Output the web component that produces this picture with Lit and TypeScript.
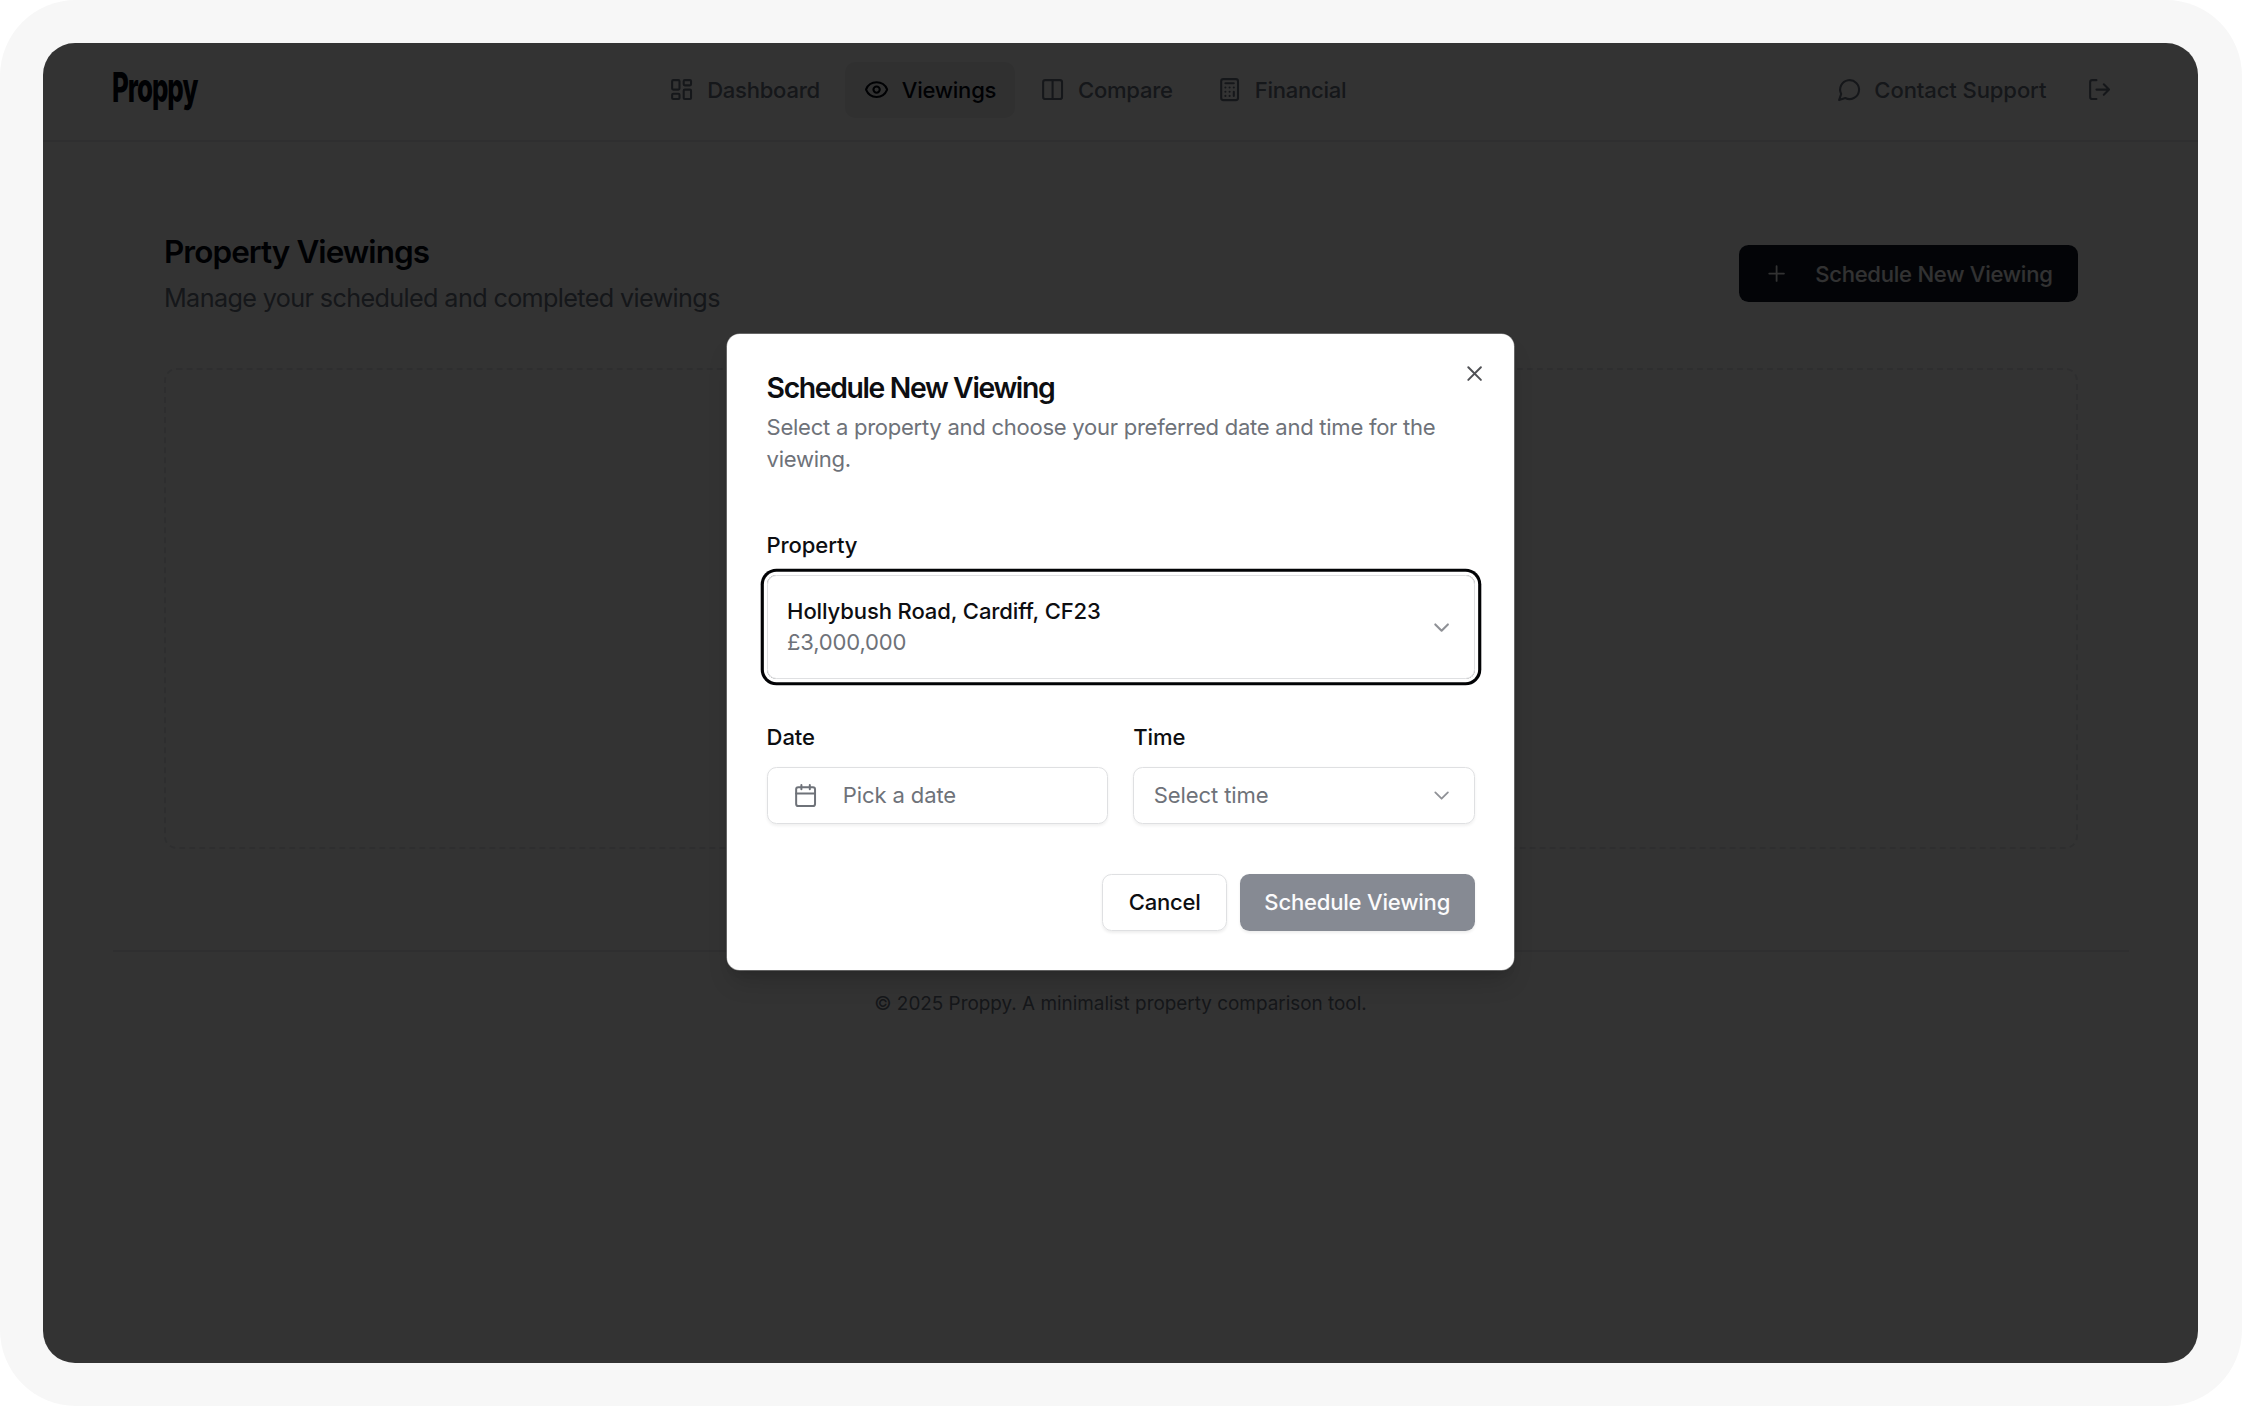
import { LitElement, html, css, svg, TemplateResult } from 'lit';
import { customElement, property } from 'lit/decorators.js';

const ICONS: Record<string, TemplateResult> = {
  dashboard: svg`<rect x="3" y="3" width="7" height="9" rx="1"/><rect x="14" y="3" width="7" height="5" rx="1"/><rect x="14" y="12" width="7" height="9" rx="1"/><rect x="3" y="16" width="7" height="5" rx="1"/>`,
  eye: svg`<path d="M2.06 12.35a1 1 0 0 1 0-.7 10.75 10.75 0 0 1 19.88 0 1 1 0 0 1 0 .7 10.75 10.75 0 0 1-19.88 0"/><circle cx="12" cy="12" r="3"/>`,
  columns: svg`<rect x="3" y="3" width="18" height="18" rx="2"/><path d="M12 3v18"/>`,
  calculator: svg`<rect x="4" y="2" width="16" height="20" rx="2"/><path d="M8 6h8M16 14v4M16 10h.01M12 10h.01M8 10h.01M12 14h.01M8 14h.01M12 18h.01M8 18h.01"/>`,
  message: svg`<path d="M7.9 20A9 9 0 1 0 4 16.1L2 22Z"/>`,
  logout: svg`<path d="M9 21H5a2 2 0 0 1-2-2V5a2 2 0 0 1 2-2h4M16 17l5-5-5-5M21 12H9"/>`,
  plus: svg`<path d="M5 12h14M12 5v14"/>`,
  close: svg`<path d="M18 6 6 18M6 6l12 12"/>`,
  chevron: svg`<path d="m6 9 6 6 6-6"/>`,
  calendar: svg`<path d="M8 2v4M16 2v4M3 10h18"/><rect x="3" y="4" width="18" height="18" rx="2"/>`,
};

@customElement('line-icon')
class LineIcon extends LitElement {
  @property() name = '';
  @property({ type: Number }) weight = 2;
  static styles = css`
    :host { display: block; flex: none; width: 25.2px; height: 25.2px; }
    svg { display: block; width: 100%; height: 100%; fill: none; stroke: currentColor; stroke-linecap: round; stroke-linejoin: round; }
  `;
  render() {
    return html`<svg viewBox="0 0 24 24" stroke-width=${this.weight}>${ICONS[this.name]}</svg>`;
  }
}

@customElement('app-header')
class AppHeader extends LitElement {
  static styles = css`
    :host { display: flex; align-items: center; box-sizing: border-box; height: 99px; padding: 0 69.5px 4px; border-bottom: 2px solid #eaebee; font-size: 22.05px; font-weight: 500; color: #6b7280; }
    .brand { width: 538px; color: #030712; }
    .word { display: inline-block; font-size: 40.5px; font-weight: 800; line-height: 48px; letter-spacing: -1.6px; transform: scaleX(0.638); transform-origin: 0 50%; margin: 0 0 4px -1px; }
    nav { display: flex; gap: 6.3px; }
    .item { display: flex; align-items: center; gap: 12.6px; height: 56px; padding: 0 18.9px; border-radius: 10px; white-space: nowrap; letter-spacing: -0.25px; }
    .item.active { background: #eeeff1; color: #030712; }
    .side { display: flex; align-items: center; margin-left: auto; padding-right: 16px; white-space: nowrap; letter-spacing: -0.1px; }
    .side span { margin: 0 41px 0 12.6px; }
  `;
  render() {
    const items = [['dashboard', 'Dashboard'], ['eye', 'Viewings'], ['columns', 'Compare'], ['calculator', 'Financial']];
    return html`
      <div class="brand"><span class="word">Proppy</span></div>
      <nav>${items.map(([icon, label]) => html`<div class="item ${label === 'Viewings' ? 'active' : ''}"><line-icon name=${icon}></line-icon><span>${label}</span></div>`)}</nav>
      <div class="side"><line-icon name="message"></line-icon><span>Contact Support</span><line-icon name="logout"></line-icon></div>`;
  }
}

@customElement('viewings-page')
class ViewingsPage extends LitElement {
  static styles = css`
    :host { display: block; }
    main { padding: 87.4px 120.5px 0 121px; }
    .top { display: flex; justify-content: space-between; align-items: center; }
    h1 { margin: 0 0 6px; font-size: 31.5px; line-height: 44px; font-weight: 600; letter-spacing: -0.95px; color: #030712; }
    p { margin: 0; font-size: 25.2px; line-height: 37.8px; letter-spacing: -0.63px; color: #6b7280; }
    .cta { display: flex; align-items: center; box-sizing: border-box; width: 338.5px; height: 56.7px; padding-left: 25px; gap: 26px; border-radius: 9.5px; background: #111827; color: #f9fafb; font-size: 22.05px; font-weight: 500; letter-spacing: -0.25px; white-space: nowrap; }
    .empty { box-sizing: border-box; height: 481px; margin-top: 50.6px; border: 2px dashed #e5e7eb; border-radius: 12.6px; }
    footer { margin: 101px 69.5px 0; padding-top: 38.3px; border-top: 2px solid #eaebee; text-align: center; font-size: 18.9px; line-height: 28px; color: #6b7280; }
  `;
  render() {
    return html`
      <main>
        <div class="top">
          <div><h1>Property Viewings</h1><p>Manage your scheduled and completed viewings</p></div>
          <div class="cta"><line-icon name="plus" weight="1.7"></line-icon><span>Schedule New Viewing</span></div>
        </div>
        <div class="empty"></div>
      </main>
      <footer>© 2025 Proppy. A minimalist property comparison tool.</footer>`;
  }
}

@customElement('schedule-dialog')
class ScheduleDialog extends LitElement {
  static styles = css`
    :host { display: block; position: relative; box-sizing: border-box; width: 787px; height: 635.5px; padding: 39.8px 39.3px 38px; border-radius: 12.6px; background: #fff; box-shadow: 0 0 0 0.5px #999, 0 16px 24px -5px rgba(0, 0, 0, 0.16), 0 6px 10px -6px rgba(0, 0, 0, 0.16); color: #0d0e11; font-size: 22.05px; }
    .close { position: absolute; top: 26.4px; right: 27px; color: #505155; }
    h2 { margin: 0 0 9.4px; font-size: 28.35px; line-height: 28.4px; font-weight: 600; letter-spacing: -1.36px; }
    p { margin: 0 0 58.9px; width: 690px; line-height: 31.5px; letter-spacing: -0.27px; color: #6e7279; }
    .label { font-weight: 500; line-height: 22px; margin-bottom: 19px; letter-spacing: -0.12px; }
    .control { display: flex; align-items: center; box-sizing: border-box; border: 1.5px solid #dfe0e2; border-radius: 9.5px; box-shadow: 0 1.6px 3px rgba(0, 0, 0, 0.06); padding: 0 19.7px 0 19.5px; height: 57px; color: #6e7279; letter-spacing: -0.12px; }
    .control .chev { margin-left: auto; color: #8f9196; }
    .control .cal { margin: 0 24.5px 0 6px; }
    .property { height: 104px; line-height: 31.5px; padding-top: 1px; box-shadow: 0 0 0 3.15px #fff, 0 0 0 6.3px #020305; }
    .name { color: #0d0e11; font-weight: 500; letter-spacing: -0.12px; }
    .price { letter-spacing: -0.2px; }
    .row { display: grid; grid-template-columns: 1fr 1fr; gap: 25px; margin-top: 47px; }
    .actions { display: flex; justify-content: flex-end; gap: 12.6px; margin-top: 50px; }
    .btn { display: flex; align-items: center; justify-content: center; box-sizing: border-box; height: 57px; border-radius: 9.5px; font-weight: 500; box-shadow: 0 1.6px 3px rgba(0, 0, 0, 0.07); }
    .cancel { width: 124.5px; border: 1.5px solid #dfe0e2; letter-spacing: -0.25px; }
    .submit { width: 235.5px; background: #868a93; color: #fbfbfc; letter-spacing: -0.2px; }
  `;
  render() {
    return html`
      <line-icon class="close" name="close" weight="1.9"></line-icon>
      <h2>Schedule New Viewing</h2>
      <p>Select a property and choose your preferred date and time for the viewing.</p>
      <div class="label">Property</div>
      <div class="control property">
        <div><div class="name">Hollybush Road, Cardiff, CF23</div><div class="price">£3,000,000</div></div>
        <line-icon class="chev" name="chevron" weight="2"></line-icon>
      </div>
      <div class="row">
        <div>
          <div class="label">Date</div>
          <div class="control"><line-icon class="cal" name="calendar" weight="1.9"></line-icon><span>Pick a date</span></div>
        </div>
        <div>
          <div class="label">Time</div>
          <div class="control"><span>Select time</span><line-icon class="chev" name="chevron" weight="1.7"></line-icon></div>
        </div>
      </div>
      <div class="actions"><div class="btn cancel">Cancel</div><div class="btn submit">Schedule Viewing</div></div>`;
  }
}

@customElement('app-root')
class AppRoot extends LitElement {
  static styles = css`
    :host { display: block; width: 2242px; height: 1407px; overflow: hidden; background: #fff; font-family: Inter, "Liberation Sans", sans-serif; }
    .frame { box-sizing: border-box; height: 1406px; padding: 43.3px 44px 43px 43px; border-radius: 76px; background: #f7f7f7; }
    .screen { position: relative; height: 1320px; border-radius: 32px; overflow: hidden; background: #fff; }
    .overlay { position: absolute; inset: 0; background: rgba(0, 0, 0, 0.8); }
    .modal { position: absolute; left: 684.3px; top: 291.2px; }
  `;
  render() {
    return html`
      <div class="frame">
        <div class="screen">
          <app-header></app-header>
          <viewings-page></viewings-page>
          <div class="overlay"></div>
          <schedule-dialog class="modal"></schedule-dialog>
        </div>
      </div>`;
  }
}
